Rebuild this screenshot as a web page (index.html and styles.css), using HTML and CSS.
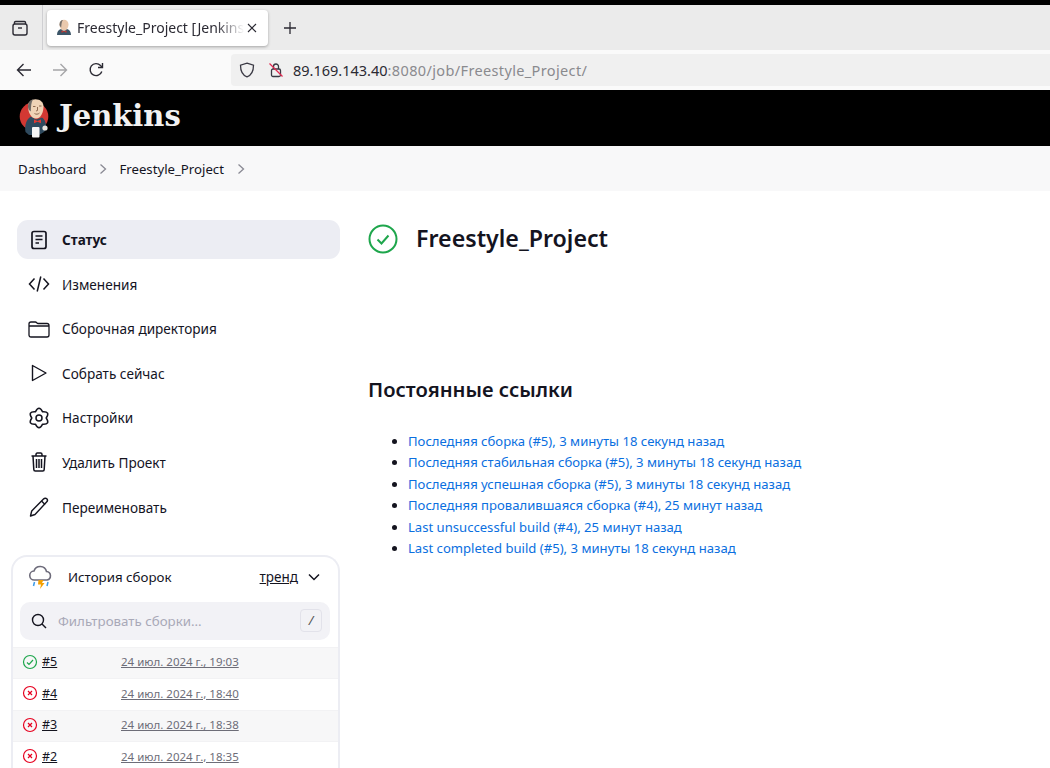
FILE: index.html
```html
<!DOCTYPE html>
<html lang="en">
<head>
  <meta charset="UTF-8" />
  <title>Freestyle_Project [Jenkins]</title>
  <link rel="stylesheet" href="styles.css">
</head>
<body>
  <div class="browser">
    <div class="tabbar">
      <div class="tab-view">
        <svg width="18" height="18" viewBox="0 0 18 18" fill="none" stroke="#2b2a33" stroke-width="1.4"><path d="M3.500 5V3.600c0-.7.500-1.100 1.100-1.100h8.800c.6 0 1.100.4 1.100 1.100V5"/><rect x="2" y="5" width="14" height="11" rx="2"/><path d="M7 9h4"/></svg>
      </div>
      <div class="tab">
        <svg class="favicon" width="16" height="17" viewBox="0 0 16 17">
          <path d="M1 16c0-3.500 1.500-5.500 4-6l3 1 3-1c2.500.5 4 2.500 4 6z" fill="#3c5568"/>
          <path d="M3.500 5.500C3.500 2.500 5.500.8 8 .8s4.500 1.700 4.500 4.700-2 6.300-4.500 6.300-4.500-3.300-4.500-6.300z" fill="#eac9ad"/>
          <path d="M3.500 5.500C3.500 2.500 5 1.200 7 1 5.500 3 5.500 5 5.200 8.500 4 7.500 3.500 6.500 3.500 5.500z" fill="#77716c"/>
          <path d="M5.500 11.500l2.500 1 2.500-1v2.300l-2.500-1-2.500 1z" fill="#c8342e"/>
        </svg>
        <span class="tab-title">Freestyle_Project [Jenkins</span>
        <svg class="tab-close" width="12" height="12" viewBox="0 0 12 12" stroke="#2b2a33" stroke-width="1.100"><path d="M2 2l8 8M10 2l-8 8"/></svg>
      </div>
      <svg class="new-tab" width="14" height="14" viewBox="0 0 14 14" stroke="#2b2a33" stroke-width="1.300"><path d="M7 1v12M1 7h12"/></svg>
    </div>
    <div class="toolbar">
      <svg class="nav-btn" width="16" height="16" viewBox="0 0 16 16" fill="none" stroke="#2b2a33" stroke-width="1.400"><path d="M15 8H1.500M7.500 2L1.500 8l6 6"/></svg>
      <svg class="nav-btn" width="16" height="16" viewBox="0 0 16 16" fill="none" stroke="#a5a5a8" stroke-width="1.400"><path d="M1 8h13.500M8.500 2l6 6-6 6"/></svg>
      <svg class="nav-btn" width="16" height="16" viewBox="0 0 16 16" fill="none" stroke="#2b2a33" stroke-width="1.400"><path d="M13.800 9.500A6 6 0 1 1 12.500 3.500L14 5"/><path d="M14.500 1v4.500H10"/></svg>
      <div class="urlbar">
        <svg width="16" height="16" viewBox="0 0 16 16" fill="none" stroke="#3a3944" stroke-width="1.300"><path d="M8 1.200l6.500 2c0 6-1.500 9.800-6.500 11.600C3 13 1.500 9.200 1.500 3.200z"/></svg>
        <svg class="lock" width="16" height="16" viewBox="0 0 16 16" fill="none"><path d="M5.500 7V4.500a2.500 2.500 0 0 1 5 0V7" stroke="#3a3944" stroke-width="1.300"/><rect x="3.500" y="7" width="9" height="7.500" rx="1.500" stroke="#3a3944" stroke-width="1.300"/><path d="M1.500 1.500l13 13" stroke="#e22850" stroke-width="1.300"/></svg>
        <span class="url"><span class="url-host">89.169.143.40</span>:8080/job/Freestyle_Project/</span>
      </div>
    </div>
  </div>

  <header class="jenkins-head">
    <svg class="logo" width="32" height="40" viewBox="0 0 32 40">
      <circle cx="15" cy="18.500" r="14.300" fill="#d33833"/>
      <path d="M6.500 34c-1-6 .5-13 5.500-15.500l5 3 6-2c3 2 4.500 6 4 12l-2 2.500-5 3H10z" fill="#2f4a5e"/>
      <path d="M9 8.500C9 4 12 1.200 16.500 1.200S24.500 4 24.500 8.500c0 5.500-2.500 12-7.500 12S9 14 9 8.500z" fill="#efd3b6"/>
      <path d="M9 8.500C9 4.500 11 2 14 1.400 12.200 4 12 8 11.800 13.500 10 12.500 9 10.500 9 8.500z" fill="#6f6a66"/>
      <path d="M14 8.500h2.500M20 8h2.500M18.500 9v3.500l-1.500.5M15.500 15.500c1.500 1 3.500 1 5-.5" fill="none" stroke="#8f6a50" stroke-width="1"/>
      <path d="M15 21.500l3.500 1.500 3.500-1.500v3.800l-3.500-1.500-3.500 1.500z" fill="#e03a33"/>
      <rect x="13" y="29" width="7.500" height="10.500" rx="1" fill="#f6f6f6"/>
      <circle cx="26" cy="30" r="2.600" fill="#e8e4de"/>
    </svg>
    <span class="brand">Jenkins</span>
  </header>

  <nav class="breadcrumbs">
    <span>Dashboard</span>
    <svg width="10" height="12" viewBox="0 0 10 12" fill="none" stroke="#8a8a94" stroke-width="1.300"><path d="M2.500 1.500L7.500 6l-5 4.500"/></svg>
    <span>Freestyle_Project</span>
    <svg width="10" height="12" viewBox="0 0 10 12" fill="none" stroke="#8a8a94" stroke-width="1.300"><path d="M2.500 1.500L7.500 6l-5 4.500"/></svg>
  </nav>

  <div class="page">
    <aside class="side">
      <ul class="tasks">
        <li class="task active">
          <svg width="22" height="22" viewBox="0 0 22 22" fill="none" stroke="#14141f" stroke-width="1.700"><rect x="4" y="2.500" width="14" height="17" rx="2"/><path d="M7.500 7h7M7.500 10.500h7M7.500 14h3.500"/></svg>
          <span>Статус</span>
        </li>
        <li class="task">
          <svg width="22" height="22" viewBox="0 0 22 22" fill="none" stroke="#14141f" stroke-width="1.500"><path d="M6.500 5.500L1.500 11l5 5.500M15.500 5.500l5 5.500-5 5.500M12.800 3.500L9.200 18.500"/></svg>
          <span>Изменения</span>
        </li>
        <li class="task">
          <svg width="22" height="22" viewBox="0 0 22 22" fill="none" stroke="#14141f" stroke-width="1.300"><path d="M1 6c0-1.200.8-2 2-2h4.500c1 0 1.500 1.500 2.500 1.500h9c1.200 0 2 .8 2 2V17c0 1.200-.8 2-2 2H3c-1.200 0-2-.8-2-2zM1 8h20"/></svg>
          <span>Сборочная директория</span>
        </li>
        <li class="task">
          <svg width="22" height="22" viewBox="0 0 22 22" fill="none" stroke="#14141f" stroke-width="1.400" stroke-linejoin="round"><path d="M4.500 3.500L18 11 4.500 18.500z"/></svg>
          <span>Собрать сейчас</span>
        </li>
        <li class="task">
          <svg width="22" height="22" viewBox="0 0 22 22" fill="none" stroke="#14141f" stroke-width="1.500" stroke-linejoin="round"><circle cx="11" cy="11" r="3"/><path d="M18.200 11Q22.700 4.250 14.600 4.800 11-2.500 7.400 4.800-.7 4.250 3.800 11-.7 17.750 7.400 17.200 11 24.500 14.600 17.200 22.700 17.750 18.200 11z"/></svg>
          <span>Настройки</span>
        </li>
        <li class="task">
          <svg width="22" height="22" viewBox="0 0 22 22" fill="none" stroke="#14141f" stroke-width="1.500"><path d="M3.500 5h15M8 5V3.500c0-.8.500-1.500 1.300-1.500h3.400c.8 0 1.300.7 1.300 1.500V5M5 5l.8 13.500c0 .9.700 1.500 1.500 1.500h7.400c.8 0 1.500-.6 1.500-1.500L17 5M8.500 8v9M11 8v9M13.500 8v9"/></svg>
          <span>Удалить Проект</span>
        </li>
        <li class="task">
          <svg width="22" height="22" viewBox="0 0 22 22" fill="none" stroke="#14141f" stroke-width="1.400" stroke-linejoin="round"><path d="M2.500 20l1.200-5L15.500 3c1-1 2.500-1 3.300-.2s.8 2.300-.2 3.300L7 18.500z"/><path d="M13.500 5l3.500 3.500"/></svg>
          <span>Переименовать</span>
        </li>
      </ul>

      <section class="history">
        <div class="history-head">
          <svg class="weather" width="26" height="28" viewBox="0 0 26 28">
            <path d="M6.500 17a4.500 4.500 0 0 1-.5-9 6.500 6.500 0 0 1 12.500 0.500 4.300 4.300 0 0 1 .5 8.500z" fill="#fff" stroke="#6d6b7a" stroke-width="1.600"/>
            <path d="M10.500 17h5l-1.500 3h2.500l-4.500 6 1-4.500H10z" fill="#f5a000"/>
            <path d="M6.500 19l-1 4M20 19l-1 4" stroke="#3d9be9" stroke-width="1.500"/>
          </svg>
          <span class="history-title">История сборок</span>
          <span class="trend">тренд</span>
          <svg class="chevron" width="12" height="8" viewBox="0 0 12 8" fill="none" stroke="#14141f" stroke-width="1.500"><path d="M1 1.500l5 5 5-5"/></svg>
        </div>
        <div class="filter">
          <svg width="16" height="16" viewBox="0 0 16 16" fill="none" stroke="#14141f" stroke-width="1.400"><circle cx="7" cy="7" r="5.500"/><path d="M11 11l4 4"/></svg>
          <span class="filter-text">Фильтровать сборки...</span>
          <span class="kbd">/</span>
        </div>
        <div class="build odd">
          <svg width="16" height="16" viewBox="0 0 16 16" fill="none" stroke="#1ea64c" stroke-width="1.200"><circle cx="8" cy="8" r="6.500"/><path d="M5 8.500l2 2 4-4.500"/></svg>
          <a class="build-num">#5</a><a class="build-date">24 июл. 2024 г., 19:03</a>
        </div>
        <div class="build">
          <svg width="16" height="16" viewBox="0 0 16 16" fill="none" stroke="#e6001f" stroke-width="1.200"><circle cx="8" cy="8" r="6.500"/><path d="M6 6l4 4M10 6l-4 4"/></svg>
          <a class="build-num">#4</a><a class="build-date">24 июл. 2024 г., 18:40</a>
        </div>
        <div class="build odd">
          <svg width="16" height="16" viewBox="0 0 16 16" fill="none" stroke="#e6001f" stroke-width="1.200"><circle cx="8" cy="8" r="6.500"/><path d="M6 6l4 4M10 6l-4 4"/></svg>
          <a class="build-num">#3</a><a class="build-date">24 июл. 2024 г., 18:38</a>
        </div>
        <div class="build">
          <svg width="16" height="16" viewBox="0 0 16 16" fill="none" stroke="#e6001f" stroke-width="1.200"><circle cx="8" cy="8" r="6.500"/><path d="M6 6l4 4M10 6l-4 4"/></svg>
          <a class="build-num">#2</a><a class="build-date">24 июл. 2024 г., 18:35</a>
        </div>
      </section>
    </aside>

    <main class="main">
      <div class="job-title">
        <svg width="30" height="30" viewBox="0 0 30 30" fill="none" stroke="#1ea64c" stroke-width="2"><circle cx="15" cy="15" r="13.500"/><path d="M9.500 15.500l4 4 7-8"/></svg>
        <h1>Freestyle_Project</h1>
      </div>
      <h2>Постоянные ссылки</h2>
      <ul class="permalinks">
        <li><a>Последняя сборка (#5), 3 минуты 18 секунд назад</a></li>
        <li><a>Последняя стабильная сборка (#5), 3 минуты 18 секунд назад</a></li>
        <li><a>Последняя успешная сборка (#5), 3 минуты 18 секунд назад</a></li>
        <li><a>Последняя провалившаяся сборка (#4), 25 минут назад</a></li>
        <li><a>Last unsuccessful build (#4), 25 минут назад</a></li>
        <li><a>Last completed build (#5), 3 минуты 18 секунд назад</a></li>
      </ul>
    </main>
  </div>
</body>
</html>
```

FILE: styles.css
```css
* { box-sizing: border-box; }
html, body { height: 768px; }
body {
  margin: 0;
  overflow: hidden;
  background: #fff;
  color: #14141f;
  font-family: "Noto Sans", sans-serif;
  font-size: 13px;
}
ul { margin: 0; padding: 0; }

/* browser chrome */
.browser {
  border-top: 5px solid #000;
}
.tabbar {
  display: flex;
  align-items: center;
  height: 45px;
  background: #ebebeb;
}
.tab-view {
  display: flex;
  align-items: center;
  width: 43px;
  height: 45px;
  padding-left: 11px;
  border-right: 1px solid #cfcfd2;
}
.tab {
  display: flex;
  align-items: center;
  width: 221px;
  height: 36px;
  margin-left: 4px;
  padding: 0 10px 0 9px;
  background: #fff;
  border-radius: 4px;
  box-shadow: 0 1px 3px rgba(0,0,0,0.3);
}
.favicon { flex: none; margin-right: 5px; }
.tab-title {
  flex: 1;
  white-space: nowrap;
  font-size: 14px;
  color: #2b2a33;
  -webkit-mask-image: linear-gradient(to right, #000 82%, transparent 99%);
  mask-image: linear-gradient(to right, #000 82%, transparent 99%);
}
.tab-close { flex: none; }
.new-tab { margin-left: 15px; }
.toolbar {
  display: flex;
  align-items: center;
  height: 40px;
  padding-left: 16px;
  background: #fafafa;
}
.nav-btn { margin-right: 20px; }
.urlbar {
  display: flex;
  align-items: center;
  width: 819px;
  height: 32px;
  margin-left: 107px;
  padding-left: 8px;
  background: #f0f0f0;
  border-radius: 4px 0 0 4px;
}
.lock { margin-left: 13px; }
.url {
  margin-left: 9px;
  font-size: 14.500px;
  letter-spacing: 0.36px;
  color: #8a8a8e;
  white-space: nowrap;
}
.url-host { color: #2b2a33; letter-spacing: 0; }

/* jenkins header */
.jenkins-head {
  display: flex;
  align-items: center;
  height: 56px;
  padding-left: 19px;
  background: #000;
}
.brand {
  margin-left: 8px;
  padding-bottom: 4px;
  font-family: "DejaVu Serif", serif;
  font-weight: bold;
  font-size: 29px;
  color: #f2f2f2;
}
.breadcrumbs {
  display: flex;
  align-items: center;
  gap: 11.600px;
  height: 45px;
  padding-left: 18px;
  background: #f8f8f9;
  font-size: 13.200px;
}

/* page */
.page { display: flex; }
.side {
  flex: none;
  width: 340px;
  padding: 29px 0 0 11px;
}
.tasks { list-style: none; padding-left: 6px; }
.task {
  display: flex;
  align-items: center;
  gap: 12px;
  height: 39px;
  margin-bottom: 5.600px;
  padding-left: 11px;
  border-radius: 11px;
  font-size: 13.600px;
}
.task.active { background: #ecedf3; font-weight: 700; }

.history {
  width: 329px;
  margin-top: 28.300px;
  border: 2px solid #ecedf3;
  border-bottom: 0;
  border-radius: 16px 16px 0 0;
}
.history-head {
  display: flex;
  align-items: center;
  height: 41px;
  padding: 0 18px 0 15px;
}
.history-title { margin-left: 14px; font-size: 13.300px; }
.trend {
  margin-left: auto;
  font-size: 13.500px;
  text-decoration: underline;
}
.chevron { margin-left: 10px; }
.filter {
  display: flex;
  align-items: center;
  height: 38px;
  margin: 4px 8px 7px 7px;
  padding: 0 8px 0 11px;
  background: #f2f2f6;
  border-radius: 10px;
}
.filter-text {
  flex: 1;
  margin-left: 11px;
  font-size: 13.300px;
  color: #a9a9b8;
}
.kbd {
  width: 22px;
  height: 23px;
  text-align: center;
  line-height: 21px;
  font-style: italic;
  color: #555;
  border: 1px solid #e2e2ea;
  border-radius: 4px;
}
.build {
  display: flex;
  align-items: center;
  height: 31.500px;
  padding-left: 9px;
  padding-bottom: 3px;
  border-top: 1px solid #f2f2f4;
}
.build.odd { background: #f7f7f8; }
.build-num {
  width: 79px;
  margin-left: 4px;
  font-size: 12.500px;
  text-decoration: underline;
}
.build-date {
  font-size: 11.500px;
  color: #6d6d78;
  text-decoration: underline;
}

.main { flex: 1; padding: 29px 0 0 28px; }
.job-title {
  display: flex;
  align-items: center;
  gap: 18px;
  height: 37px;
}
h1 {
  margin: 0;
  font-size: 23.200px;
  font-weight: 600;
  line-height: 37px;
}
h2 {
  margin: 119px 0 0;
  font-size: 20.200px;
  font-weight: 600;
  line-height: 27px;
}
.permalinks {
  margin-top: 27.600px;
  padding-left: 40px;
  font-size: 13.100px;
  line-height: 21.500px;
  color: #14141f;
}
.permalinks a { color: #0b6fe0; }
```
